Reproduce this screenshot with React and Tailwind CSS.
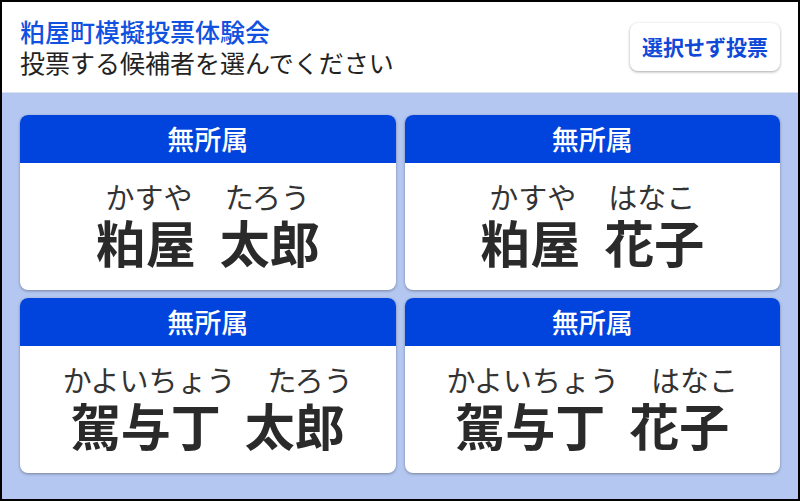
import React from 'react';

const candidates = [
  { party: '無所属', kana: ['かすや', 'たろう'], name: ['粕屋', '太郎'] },
  { party: '無所属', kana: ['かすや', 'はなこ'], name: ['粕屋', '花子'] },
  { party: '無所属', kana: ['かよいちょう', 'たろう'], name: ['駕与丁', '太郎'] },
  { party: '無所属', kana: ['かよいちょう', 'はなこ'], name: ['駕与丁', '花子'] },
];

function CandidateCard({ c }) {
  return (
    <button className="flex flex-col rounded-lg overflow-hidden bg-white shadow-[0_1px_3px_rgba(0,0,0,0.35)] text-left">
      <div className="h-[48px] w-full bg-[#0044dd] text-white text-[27px] font-medium flex items-center justify-center">
        {c.party}
      </div>
      <div className="flex-1 w-full flex flex-col items-center justify-center gap-[3px] pb-[6px]">
        <div className="text-[29px] leading-[32px] text-[#333] flex gap-[32px]">
          <span>{c.kana[0]}</span>
          <span>{c.kana[1]}</span>
        </div>
        <div className="text-[50px] leading-[52px] font-bold text-[#2a2a2a] flex gap-[24px]">
          <span>{c.name[0]}</span>
          <span>{c.name[1]}</span>
        </div>
      </div>
    </button>
  );
}

export default function App() {
  return (
    <div
      className="w-[800px] h-[501px] border-2 border-black flex flex-col bg-[#b4c7f1]"
      style={{ fontFamily: '"Noto Sans CJK JP", "Noto Sans", sans-serif' }}
    >
      <header className="h-[91px] bg-white border-b border-[#dde3ee] flex items-center justify-between pl-[18px] pr-[18px]">
        <div className="flex flex-col">
          <h1 className="text-[25px] leading-[30px] font-medium text-[#1151e0]">粕屋町模擬投票体験会</h1>
          <p className="text-[25px] leading-[32px] text-[#222]">投票する候補者を選んでください</p>
        </div>
        <button className="h-[48px] px-[12px] rounded-lg bg-white shadow-[0_1px_3px_rgba(0,0,0,0.35)] text-[21px] font-bold text-[#1048d8]">
          選択せず投票
        </button>
      </header>
      <main className="flex-1 grid grid-cols-2 grid-rows-2 gap-x-[9px] gap-y-[8px] pt-[22px] pb-[26px] px-[18px]">
        {candidates.map((c, i) => (
          <CandidateCard key={i} c={c} />
        ))}
      </main>
    </div>
  );
}
